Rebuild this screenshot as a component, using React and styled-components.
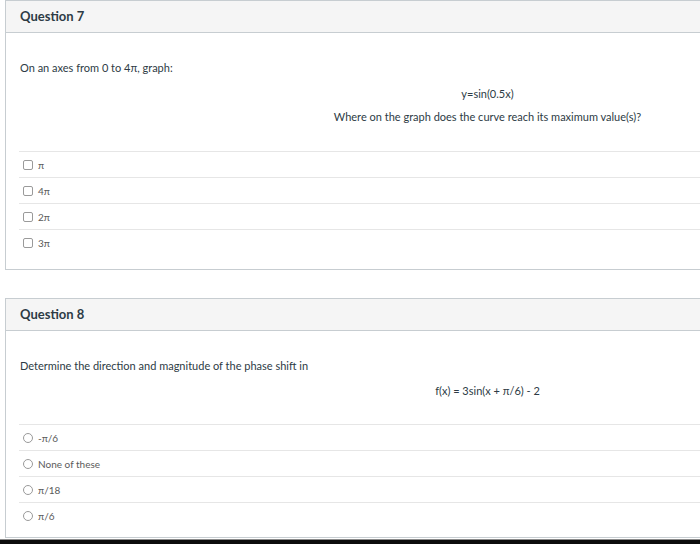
import React from 'react';
import styled, { createGlobalStyle } from 'styled-components';

const GlobalStyle = createGlobalStyle`
  html, body {
    margin: 0;
    padding: 0;
    background: #fff;
    overflow: hidden;
  }
  body {
    font-family: Lato, "Open Sans", "DejaVu Sans", sans-serif;
    color: #2d3b45;
  }
`;

const Page = styled.div`
  width: 700px;
  height: 544px;
  display: flex;
  flex-direction: column;
  overflow: hidden;
`;

const Card = styled.section`
  width: 951px;
  margin: ${(p) => p.$top}px 0 0 5px;
  border: 1px solid #c7cdd1;
  flex-shrink: 0;
  box-sizing: border-box;
`;

const Header = styled.header`
  height: 30px;
  padding-bottom: 1px;
  box-sizing: content-box;
  background: #f5f5f5;
  border-bottom: 1px solid #c7cdd1;
  display: flex;
  align-items: center;
  padding-left: 14px;
  font-size: 13px;
  font-weight: 700;
  color: #2d3b45;
`;

const Body = styled.div`
  padding: ${(p) => p.$top}px 0 ${(p) => p.$bottom}px 13px;
`;

const Text = styled.p`
  margin: ${(p) => p.$gap || 0}px 0 0;
  padding-left: 1px;
  font-size: 11px;
  line-height: 16px;
  color: #2d3b45;
  text-align: ${(p) => (p.$center ? 'center' : 'left')};
`;

const Answers = styled.ul`
  list-style: none;
  margin: ${(p) => p.$gap}px 0 0;
  padding: 0;
`;

const Row = styled.li`
  height: 25px;
  border-top: 1px solid #e6e6e6;
  display: flex;
  align-items: center;
  gap: 5px;
  padding-left: 4px;
  font-size: 10px;
  color: #5a5a5a;
`;

const Box = styled.span`
  width: 8px;
  height: 8px;
  border: 1px solid #9a9a9a;
  border-radius: ${(p) => (p.$round ? '50%' : '2px')};
  background: #fff;
  flex-shrink: 0;
`;

const BottomBar = styled.div`
  margin-top: 1px;
  height: 5px;
  border-top: 1px solid #8a8a8a;
  background: #0c0c0c;
  flex-shrink: 0;
`;

const q7Answers = ['π', '4π', '2π', '3π'];
const q8Answers = ['-π/6', 'None of these', 'π/18', 'π/6'];

export default function App() {
  return (
    <Page>
      <GlobalStyle />
      <Card $top={0}>
        <Header>Question 7</Header>
        <Body $top={27} $bottom={14}>
          <Text>On an axes from 0 to 4π, graph:</Text>
          <Text $center $gap={10}>y=sin(0.5x)</Text>
          <Text $center $gap={7}>Where on the graph does the curve reach its maximum value(s)?</Text>
          <Answers $gap={26}>
            {q7Answers.map((a) => (
              <Row key={a}>
                <Box />
                {a}
              </Row>
            ))}
          </Answers>
        </Body>
      </Card>
      <Card $top={28}>
        <Header>Question 8</Header>
        <Body $top={27} $bottom={9}>
          <Text>Determine the direction and magnitude of the phase shift in</Text>
          <Text $center $gap={9}>f(x) = 3sin(x + π/6) - 2</Text>
          <Answers $gap={25}>
            {q8Answers.map((a) => (
              <Row key={a}>
                <Box $round />
                {a}
              </Row>
            ))}
          </Answers>
        </Body>
      </Card>
      <BottomBar />
    </Page>
  );
}
